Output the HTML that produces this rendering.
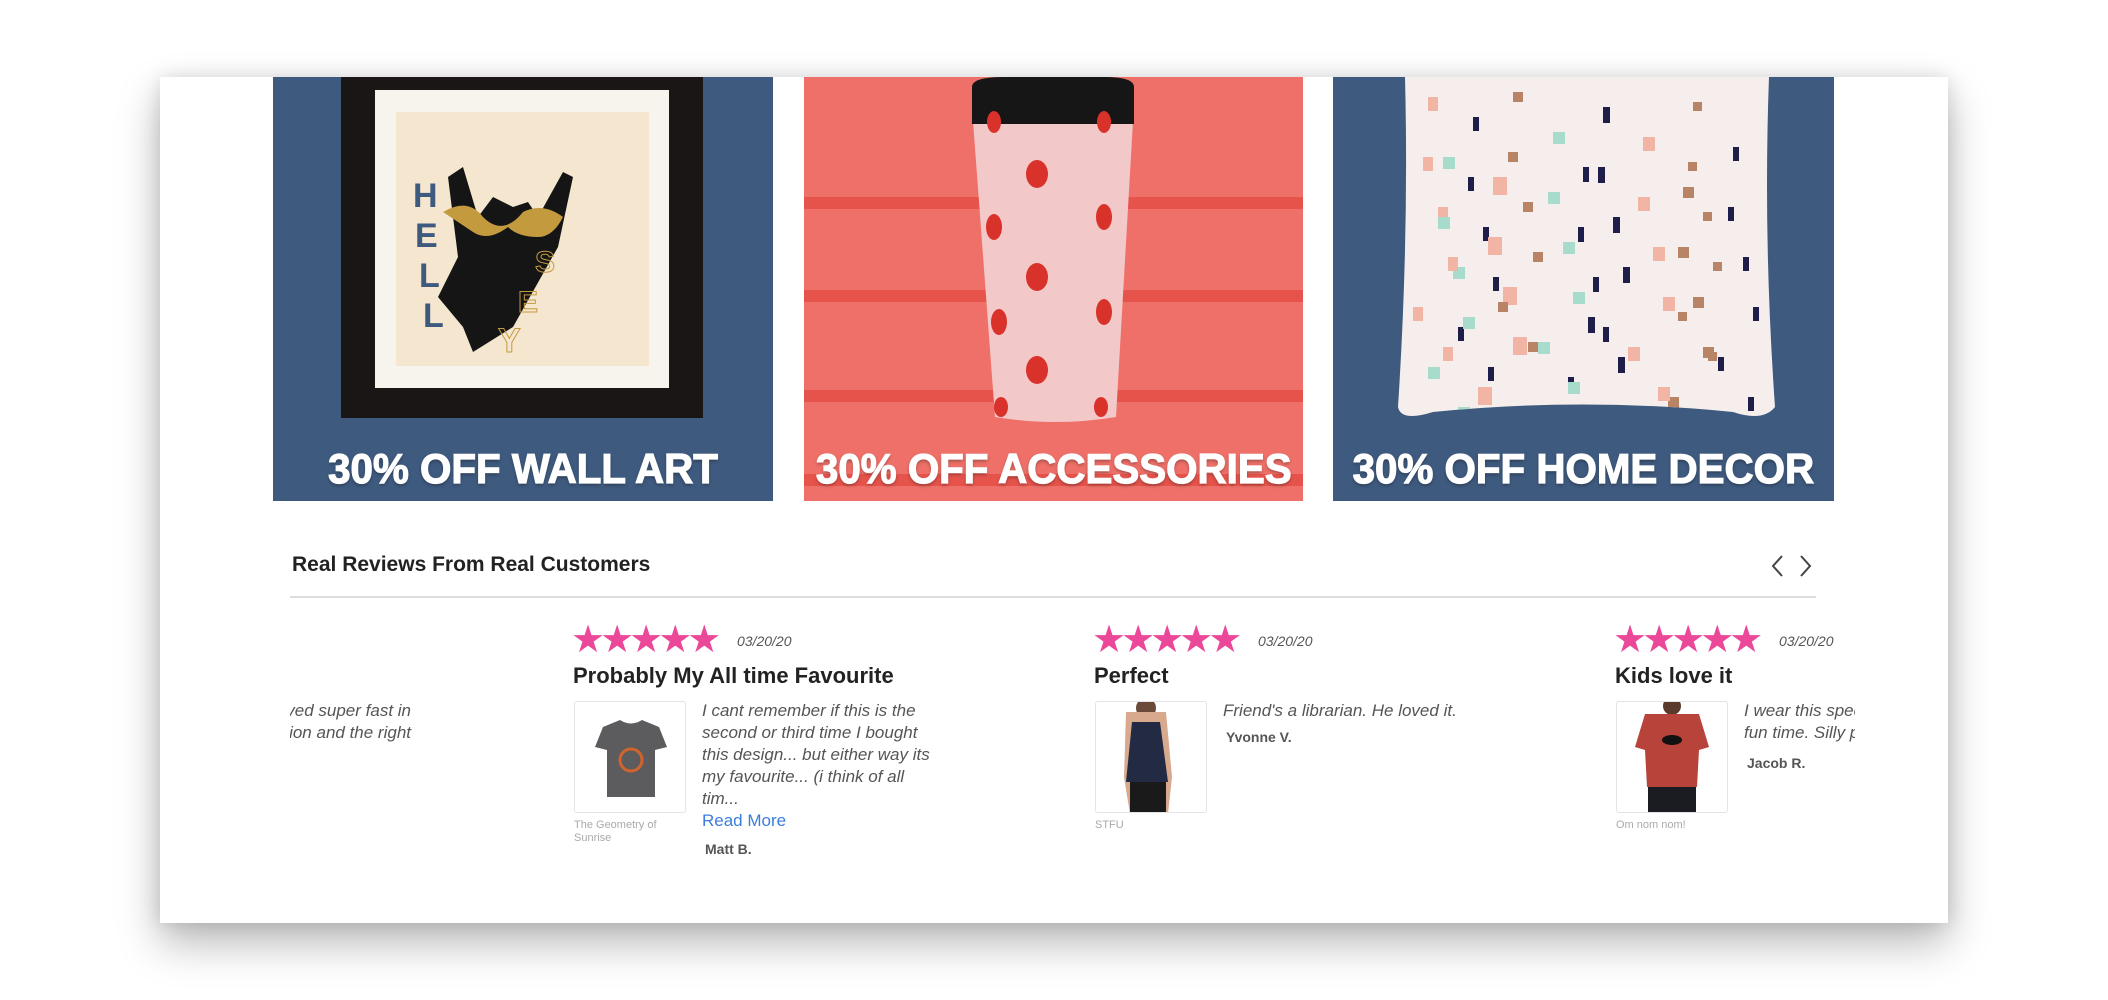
<!DOCTYPE html>
<html><head><meta charset="utf-8"><style>
*{margin:0;padding:0;box-sizing:border-box}
body{width:2108px;height:1000px;background:#fff;position:relative;overflow:hidden;font-family:"Liberation Sans",sans-serif}
.card{position:absolute;left:160px;top:77px;width:1788px;height:846px;background:#fff;box-shadow:0 20px 40px rgba(0,0,0,.28),0 0 18px rgba(0,0,0,.12)}
.ban{position:absolute;top:77px;height:424px;overflow:hidden}
.bt{position:absolute;left:0;right:0;top:364px;text-align:center;color:#fff;font-weight:bold;font-size:42px;line-height:56px;letter-spacing:0px;-webkit-text-stroke:1.2px #fff;text-shadow:0 2px 4px rgba(0,0,0,.35);white-space:nowrap}
.bt span{display:inline-block;transform:scaleX(.96)}
.h{position:absolute;left:292px;top:553px;font-size:21px;font-weight:bold;color:#222}
.line{position:absolute;left:290px;top:596px;width:1526px;height:2px;background:#ddd}
.clip{position:absolute;left:290px;top:620px;width:1565px;height:240px;overflow:hidden}
.rev{position:absolute;top:0}
.stars{position:absolute;left:0;top:4px;color:#ec4899;font-size:38px;letter-spacing:-5px;line-height:32px}
.date{position:absolute;left:166px;top:13px;font-size:14px;font-style:italic;color:#555}
.tt{position:absolute;left:2px;top:43px;font-size:22px;font-weight:bold;color:#222;white-space:nowrap}
.img{position:absolute;left:3px;top:81px;width:112px;height:112px;border:1px solid #e3e3e8;border-radius:3px;background:#fff;overflow:hidden}
.txt{position:absolute;left:131px;top:80px;width:240px;font-size:17px;line-height:22px;font-style:italic;color:#555}
.cap{position:absolute;left:3px;top:199px;font-size:11px;line-height:13px;color:#aaa;width:100px}
.name{font-style:normal;font-weight:bold;font-size:14px;color:#555;margin-left:3px}
.rm{font-style:normal;color:#3b7ddd;font-size:17px}
</style></head><body>
<div class="card"></div>

<div class="ban" style="left:273px;width:500px;background:#3f5a7f">
<svg width="500" height="424" style="position:absolute;left:0;top:0">
<rect x="68" y="0" width="362" height="341" fill="#1a1616"/>
<rect x="102" y="13" width="294" height="298" fill="#f7f4ee"/>
<rect x="123" y="35" width="253" height="254" fill="#f5e7cf"/>
<path d="M175 100 L190 90 L205 140 L220 120 L240 130 L255 125 L265 140 L290 95 L300 100 L285 170 L240 250 L200 275 L190 250 L165 220 L185 180 Z" fill="#151515"/>
<path d="M170 135 q25 -15 40 5 q20 20 40 -5 q20 -10 40 5 q-10 20 -25 20 q-20 0 -30 -10 q-20 15 -35 5 z" fill="#c49a3f"/>
<text x="140" y="130" font-size="34" font-weight="bold" fill="#3f5a7f" font-family="Liberation Sans">H</text>
<text x="142" y="170" font-size="34" font-weight="bold" fill="#3f5a7f" font-family="Liberation Sans">E</text>
<text x="146" y="210" font-size="34" font-weight="bold" fill="#3f5a7f" font-family="Liberation Sans">L</text>
<text x="150" y="250" font-size="34" font-weight="bold" fill="#3f5a7f" font-family="Liberation Sans">L</text>
<text x="225" y="275" font-size="34" font-weight="bold" fill="none" stroke="#c49a3f" font-family="Liberation Sans">Y</text>
<text x="245" y="235" font-size="30" font-weight="bold" fill="none" stroke="#c49a3f" font-family="Liberation Sans">E</text>
<text x="262" y="195" font-size="30" font-weight="bold" fill="none" stroke="#c49a3f" font-family="Liberation Sans">S</text>
</svg>
<div class="bt"><span>30% OFF WALL ART</span></div></div>

<div class="ban" style="left:804px;width:499px;background:#ee7068">
<svg width="499" height="424" style="position:absolute;left:0;top:0">
<rect y="120" width="499" height="12" fill="#e5534b"/><rect y="213" width="499" height="12" fill="#e5534b"/>
<rect y="313" width="499" height="12" fill="#e5534b"/><rect y="397" width="499" height="12" fill="#e5534b"/>
<path d="M169 44 L329 44 L312 340 Q252 350 191 340 Z" fill="#f3c8c8"/>
<path d="M168 10 Q168 0 200 0 L300 0 Q330 0 330 10 L330 47 L168 47 Z" fill="#161616"/>
<g fill="#d9322b"><ellipse cx="233" cy="97" rx="11" ry="14"/><ellipse cx="233" cy="200" rx="11" ry="14"/><ellipse cx="233" cy="293" rx="11" ry="14"/>
<ellipse cx="190" cy="150" rx="8" ry="13"/><ellipse cx="300" cy="140" rx="8" ry="13"/><ellipse cx="195" cy="245" rx="8" ry="13"/><ellipse cx="300" cy="235" rx="8" ry="13"/>
<ellipse cx="190" cy="45" rx="7" ry="11"/><ellipse cx="300" cy="45" rx="7" ry="11"/><ellipse cx="197" cy="330" rx="7" ry="10"/><ellipse cx="297" cy="330" rx="7" ry="10"/></g>
</svg>
<div class="bt"><span>30% OFF ACCESSORIES</span></div></div>

<div class="ban" style="left:1333px;width:501px;background:#3f5a7f">
<svg width="501" height="424" style="position:absolute;left:0;top:0">
<path d="M72 0 L436 0 Q430 160 442 330 Q430 345 400 335 Q250 320 100 335 Q68 345 65 330 Q76 160 72 0 Z" fill="#f6eeec"/>
<clipPath id="pc"><path d="M72 0 L436 0 Q430 160 442 330 Q430 345 400 335 Q250 320 100 335 Q68 345 65 330 Q76 160 72 0 Z"/></clipPath>
<g clip-path="url(#pc)">
<g id="c">
<rect x="95" y="20" width="10" height="14" fill="#f2b4a4"/><rect x="140" y="40" width="6" height="14" fill="#1f1d4a"/><rect x="180" y="15" width="10" height="10" fill="#b98466"/>
<rect x="220" y="55" width="12" height="12" fill="#a7dccd"/><rect x="270" y="30" width="7" height="16" fill="#1f1d4a"/><rect x="310" y="60" width="12" height="14" fill="#f2b4a4"/>
<rect x="360" y="25" width="9" height="9" fill="#b98466"/><rect x="400" y="70" width="6" height="14" fill="#1f1d4a"/><rect x="110" y="80" width="12" height="12" fill="#a7dccd"/>
<rect x="160" y="100" width="14" height="18" fill="#f2b4a4"/><rect x="250" y="90" width="6" height="15" fill="#1f1d4a"/><rect x="350" y="110" width="11" height="11" fill="#b98466"/>
</g>
<use href="#c" x="10" y="110"/><use href="#c" x="-15" y="210"/><use href="#c" x="20" y="160"/><use href="#c" x="-5" y="60"/><use href="#c" x="15" y="250"/>
</g>
</svg>
<div class="bt"><span>30% OFF HOME DECOR</span></div></div>

<div class="h">Real Reviews From Real Customers</div>
<svg style="position:absolute;left:1766px;top:552px" width="54" height="28"><path d="M16 4 L7 14 L16 24 M35 4 L44 14 L35 24" fill="none" stroke="#444" stroke-width="2"/></svg>
<div class="line"></div>

<div class="clip">
<div class="rev" style="left:-300px"><div class="txt" style="top:80px;width:300px;left:121px;text-align:right">It arrived super fast in<br>good condition and the right</div></div>
<div class="rev" style="left:281px">
<div class="stars">★★★★★</div><div class="date">03/20/20</div>
<div class="tt">Probably My All time Favourite</div>
<div class="img"><svg width="112" height="112"><path d="M28 25 L45 18 Q56 25 67 18 L84 25 L92 45 L80 48 L80 95 L32 95 L32 48 L20 45 Z" fill="#5c5c5e"/><circle cx="56" cy="58" r="11" fill="none" stroke="#d0642c" stroke-width="3"/></svg></div>
<div class="cap">The Geometry of Sunrise</div>
<div class="txt">I cant remember if this is the second or third time I bought this design... but either way its my favourite... (i think of all tim...<br><span class="rm">Read More</span><div class="name" style="margin-top:6px">Matt B.</div></div>
</div>
<div class="rev" style="left:802px">
<div class="stars">★★★★★</div><div class="date">03/20/20</div>
<div class="tt">Perfect</div>
<div class="img"><svg width="112" height="112"><circle cx="50" cy="6" r="10" fill="#6b4a3a"/><path d="M30 10 L70 10 L76 75 L72 112 L34 112 L28 75 Z" fill="#d8a98c"/><path d="M36 20 L64 20 L72 80 L30 80 Z" fill="#232a44"/><rect x="34" y="80" width="36" height="32" fill="#1a1a1a"/></svg></div>
<div class="cap">STFU</div>
<div class="txt">Friend's a librarian. He loved it.<div class="name" style="margin-top:4px">Yvonne V.</div></div>
</div>
<div class="rev" style="left:1323px">
<div class="stars">★★★★★</div><div class="date">03/20/20</div>
<div class="tt">Kids love it</div>
<div class="img"><svg width="112" height="112"><circle cx="55" cy="4" r="9" fill="#5a3a2a"/><path d="M28 12 L82 12 L92 45 L82 48 L80 85 L30 85 L28 48 L18 45 Z" fill="#b8433a"/><rect x="31" y="85" width="48" height="27" fill="#1b1b22"/><ellipse cx="55" cy="38" rx="10" ry="5" fill="#111"/></svg></div>
<div class="cap">Om nom nom!</div>
<div class="txt">I wear this special shirt for dad fun time. Silly party time.<div class="name" style="margin-top:8px">Jacob R.</div></div>
</div>
</div>
</body></html>
